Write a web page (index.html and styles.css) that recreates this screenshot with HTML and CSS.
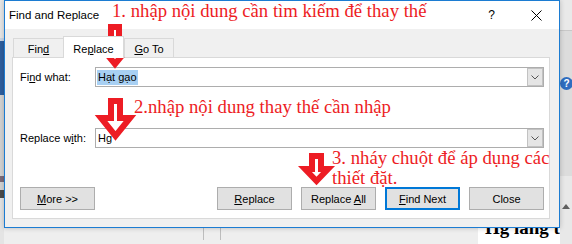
FILE: index.html
```html
<!DOCTYPE html>
<html>
<head>
<meta charset="utf-8">
<title>Find and Replace</title>
<link rel="stylesheet" href="styles.css">
</head>
<body>
<div class="screen">
  <div class="backdrop">
    <div class="edge-left"></div>
    <div class="middle">
      <div class="middle-top"></div>
      <div class="doc-strip">
        <div class="ruler"><span class="tick t1"></span><span class="tick t2"></span></div>
        <div class="page"><span class="doc-text">Hg lang t</span></div>
      </div>
    </div>
    <div class="edge-right">
      <span class="help-dot">?</span>
      <span class="scroll-up"></span>
    </div>
  </div>

  <div class="dialog">
    <div class="titlebar">
      <span class="title">Find and Replace</span>
      <span class="tb-btn">?</span>
      <span class="tb-btn">
        <svg width="11" height="11" viewBox="0 0 11 11"><path d="M0.5 0.5 L10.5 10.5 M10.5 0.5 L0.5 10.5" stroke="#000" stroke-width="1" fill="none"/></svg>
      </span>
    </div>
    <div class="dlg-body">
      <div class="tabs">
        <div class="tab tab-find">Fin<u>d</u></div>
        <div class="tab tab-replace active">Re<u>p</u>lace</div>
        <div class="tab tab-goto"><u>G</u>o To</div>
      </div>
      <div class="panel">
        <div class="row">
          <span class="label">Fi<u>n</u>d what:</span>
          <div class="combo">
            <span class="sel">Hạt gạo</span>
            <span class="drop"><svg width="8" height="5" viewBox="0 0 8 5"><path d="M0.5 0.5 L4 4 L7.5 0.5" stroke="#555" stroke-width="1" fill="none"/></svg></span>
          </div>
        </div>
        <div class="row row2">
          <span class="label">Replace w<u>i</u>th:</span>
          <div class="combo">
            <span class="val">Hg</span>
            <span class="drop"><svg width="8" height="5" viewBox="0 0 8 5"><path d="M0.5 0.5 L4 4 L7.5 0.5" stroke="#555" stroke-width="1" fill="none"/></svg></span>
          </div>
        </div>
        <div class="buttons">
          <span class="btn"><span><u>M</u>ore &gt;&gt;</span></span>
          <span class="spacer"></span>
          <span class="btn"><span><u>R</u>eplace</span></span>
          <span class="btn"><span>Replace <u>A</u>ll</span></span>
          <span class="btn default"><span><u>F</u>ind Next</span></span>
          <span class="btn"><span>Close</span></span>
        </div>
      </div>
    </div>
  </div>

  <div class="note n1">1. nhập nội dung cần tìm kiếm để thay thế</div>
  <div class="note n2">2.nhập nội dung thay thế cần nhập</div>
  <div class="note n3">3. nháy chuột để áp dụng các<br>thiết đặt.</div>

  <svg class="arrows" width="572" height="244" viewBox="0 0 572 244">
    <polygon points="111,27 119,27 119,47 129,47 115,64 101,47 111,47" />
    <polygon points="111,101 120,101 120,118 130,118 115.5,136 101,118 111,118" />
    <polygon points="312,156 321,156 321,169 328,169 316.5,181 305,169 312,169" />
  </svg>
</div>
</body>
</html>
```

FILE: styles.css
```css
html, body {
  margin: 0;
  padding: 0;
  background: #f0f0f0;
}

.screen {
  position: relative;
  width: 572px;
  height: 244px;
  overflow: hidden;
  font-family: "Liberation Sans", Arial, sans-serif;
  font-size: 11px;
  color: #000;
}

/* backdrop: the application behind the dialog */
.backdrop {
  display: flex;
  height: 100%;
}

.edge-left {
  width: 4px;
  background: linear-gradient(to bottom,
    #e6e6e6 0, #e6e6e6 38px,
    #c9d6e6 38px, #c9d6e6 41px,
    #2d5e9e 41px, #2d5e9e 95px,
    #d3d3d3 95px, #d3d3d3 176px,
    #7d6b78 176px, #7d6b78 182px,
    #d3d3d3 182px, #d3d3d3 190px,
    #4a4a4a 190px, #4a4a4a 198px,
    #e4e4e4 198px);
}

.middle {
  flex: 1;
  display: flex;
  flex-direction: column;
  background: #f0f0f0;
}

.middle-top {
  flex: 1;
}

.doc-strip {
  height: 16px;
  display: flex;
}

.ruler {
  flex: 1;
  position: relative;
  background: #eeeeee;
}

.tick {
  position: absolute;
  top: 0;
  width: 1px;
  height: 12px;
  background: #bdbdbd;
}

.t1 { left: 199px; }
.t2 { left: 216px; }

.page {
  width: 82px;
  position: relative;
  overflow: hidden;
  background: #ffffff;
}

.doc-text {
  position: absolute;
  left: 7px;
  top: -10px;
  font-family: "Liberation Serif", serif;
  font-weight: bold;
  font-size: 19px;
  line-height: 20px;
  white-space: nowrap;
}

.edge-right {
  width: 12px;
  position: relative;
  background: linear-gradient(to bottom,
    #e9e9e9 0, #e9e9e9 30px,
    #c8c8c8 30px, #c8c8c8 31px,
    #dcdcdc 31px, #dcdcdc 176px,
    #e8e8e8 176px);
}

.help-dot {
  position: absolute;
  left: 0;
  top: 77px;
  width: 13px;
  height: 13px;
  border-radius: 50%;
  background: #2f6dc0;
  color: #fff;
  font-weight: bold;
  font-size: 10px;
  line-height: 13px;
  text-align: center;
}

.scroll-up {
  position: absolute;
  left: 2px;
  top: 204px;
  width: 0;
  height: 0;
  border-left: 4px solid transparent;
  border-right: 4px solid transparent;
  border-bottom: 5px solid #606060;
}

/* dialog window */
.dialog {
  position: absolute;
  left: 4px;
  top: 0;
  width: 556px;
  height: 228px;
  box-sizing: border-box;
  border: 1px solid #1c7cd2;
  background: #f0f0f0;
  display: flex;
  flex-direction: column;
  box-shadow: 0 0 5px rgba(0, 0, 0, 0.22);
}

.titlebar {
  height: 28px;
  flex: none;
  background: #ffffff;
  display: flex;
  align-items: center;
}

.title {
  flex: 1;
  padding-left: 4px;
  font-size: 11.5px;
}

.tb-btn {
  width: 45px;
  height: 28px;
  display: flex;
  align-items: center;
  justify-content: center;
  font-size: 12px;
}

.dlg-body {
  flex: 1;
  padding: 7px 9px 8px 7px;
  display: flex;
  flex-direction: column;
}

.tabs {
  display: flex;
  align-items: flex-end;
  height: 21px;
  padding-left: 1px;
  position: relative;
  z-index: 1;
}

.tab {
  box-sizing: border-box;
  height: 19px;
  border: 1px solid #d9d9d9;
  border-bottom: none;
  background: #f0f0f0;
  text-align: center;
  padding-top: 2px;
  line-height: 17px;
}

.tab-find { width: 51px; }
.tab-replace { width: 61px; margin-left: -1px; }
.tab-goto { width: 50px; margin-left: 0; }

.tab.active {
  height: 22px;
  background: #ffffff;
  margin-bottom: -1px;
  line-height: 20px;
}

.panel {
  box-sizing: border-box;
  border: 1px solid #d9d9d9;
  background: #ffffff;
  padding: 9px 5px 8px 7px;
  display: flex;
  flex-direction: column;
}

.row {
  display: flex;
  align-items: center;
  height: 20px;
}

.row2 {
  margin-top: 41px;
}

.label {
  width: 75px;
  flex: none;
}

.combo {
  flex: 1;
  height: 20px;
  box-sizing: border-box;
  border: 1px solid #adadad;
  background: #ffffff;
  display: flex;
  align-items: center;
  padding-left: 1px;
}

.sel {
  background: #a8d0f3;
  padding: 0 1px;
  line-height: 15px;
}

.val {
  padding-left: 1px;
}

.drop {
  margin-left: auto;
  width: 16px;
  height: 18px;
  box-sizing: border-box;
  background: #e5e5e5;
  border: 1px solid #c2c2c2;
  display: flex;
  align-items: center;
  justify-content: center;
}

.buttons {
  display: flex;
  gap: 9px;
  margin-top: 39px;
}

.spacer {
  flex: 1;
}

.btn {
  width: 75px;
  height: 23px;
  box-sizing: border-box;
  border: 1px solid #adadad;
  background: #e1e1e1;
  display: flex;
  align-items: center;
  justify-content: center;
  white-space: nowrap;
}

.btn.default {
  border: 2px solid #0078d7;
}

/* annotations drawn over the screenshot */
.note {
  position: absolute;
  font-family: "Liberation Serif", "Times New Roman", serif;
  font-size: 18.7px;
  line-height: 20px;
  color: #ed1c24;
  white-space: nowrap;
}

.n1 { left: 112px; top: 1px; }
.n2 { left: 134px; top: 97px; }
.n3 { left: 332px; top: 148px; }

.arrows {
  position: absolute;
  left: 0;
  top: 0;
}

.arrows polygon {
  fill: #ffffff;
  stroke: #ed1c24;
  stroke-width: 6;
  stroke-linejoin: miter;
  stroke-miterlimit: 3;
}
```
